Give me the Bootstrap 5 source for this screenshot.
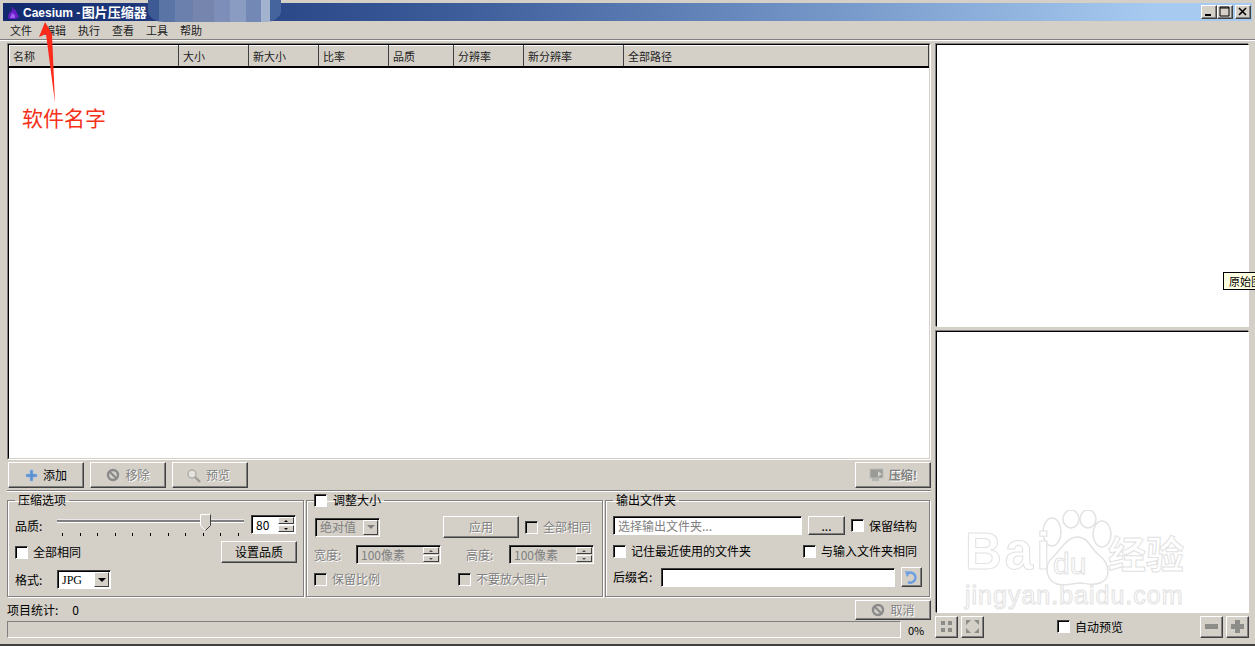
<!DOCTYPE html>
<html lang="zh-CN">
<head>
<meta charset="UTF-8">
<title>Caesium - 图片压缩器</title>
<link href="https://cdn.jsdelivr.net/npm/bootstrap@5.3.0/dist/css/bootstrap.min.css" rel="stylesheet">
<style>
  html, body { width: 1255px; height: 646px; overflow: hidden; }
  body { position: relative; background: #d4d0c8; color: #000; font: 12px/14px "Liberation Sans", "Noto Sans CJK SC", sans-serif; border-bottom: 2px solid #404040; }
  .cjk { font-family: "Noto Sans CJK SC", sans-serif; }

  /* title bar */
  .title-bar { height: 18px; margin: 3px 3px 0; padding-left: 4px; background: linear-gradient(90deg, #12296e 0%, #3a5a98 35%, #a6caf0 92%); color: #fff; font-weight: 700; font-size: 12px; }
  .title-bar svg { margin-right: 3px; }
  .title-cn { font-size: 13px; margin-left: -2px; }
  .cap-group { margin-right: 1px; }
  .cap-btn { width: 16px; height: 14px; padding: 0; background: #d4d0c8; border: 1px solid; border-color: #fff #404040 #404040 #fff; box-shadow: inset -1px -1px 0 #808080; }
  .cap-btn svg { display: block; }
  .cap-gap { margin-right: 2px; }

  /* menu */
  .menu-bar { height: 19px; padding-left: 10px; gap: 12px; border-bottom: 1px solid #808080; box-shadow: 0 1px 0 #fff; font-size: 11px; color: #222; }

  /* layout */
  .main-area { height: 604px; padding: 3px 3px 0 7px; gap: 5px; }
  .left-side { width: 924px; }
  .right-side { width: 313px; }

  /* list */
  .list-box { height: 417px; background: #fff; border: 1px solid; border-color: #808080 #fff #fff #808080; }
  .list-inner { height: 100%; border: 1px solid; border-color: #000 #d4d0c8 #d4d0c8 #000; }
  .list-head { table-layout: fixed; width: 920px; margin: 0; font-size: 11px; color: #222; }
  .list-head th { height: 21px; padding: 0 0 0 4px; font-weight: 400; background: #d4d0c8; border: 1px solid; border-color: #fff #404040 #000 #fff; border-bottom-width: 2px; line-height: 18px; }
  .list-head th:nth-child(1) { width: 169px; padding-left: 3px; }
  .list-head th:nth-child(2), .list-head th:nth-child(3), .list-head th:nth-child(4) { width: 70px; }
  .list-head th:nth-child(5) { width: 65px; }
  .list-head th:nth-child(6) { width: 70px; }
  .list-head th:nth-child(7) { width: 100px; }

  /* buttons */
  .win-btn { display: inline-flex; align-items: center; justify-content: center; gap: 5px; height: 26px; padding: 0; border-radius: 0; background: #d4d0c8; color: #000; font-size: 12px; line-height: 14px; border: 1px solid; border-color: #fff #404040 #404040 #fff; box-shadow: inset -1px -1px 0 #808080; }
  .win-btn.wide { width: 76px; }
  .win-btn.low { height: 22px; }
  .win-btn.off, .off-text { color: #808080; text-shadow: 1px 1px 0 #fff; }
  .win-btn.nudge { padding-right: 4px; }
  .tool-row { height: 26px; margin: 2px 0 0 1px; gap: 6px; }
  .sep-line { height: 2px; margin: 2px 0 0; border-top: 1px solid #808080; border-bottom: 1px solid #fff; }

  /* group boxes */
  .group-row { gap: 2px; margin: 1px 0 0; height: 104px; }
  .win-group { height: 104px; margin: 0; padding: 0 7px; border: 1px solid #808080; box-shadow: 1px 1px 0 #fff, inset 1px 1px 0 #fff; min-width: 0; }
  .win-group legend { float: none; width: auto; margin: 0; padding: 0 3px; font-size: 12px; line-height: 14px; display: flex; align-items: center; gap: 6px; }
  .win-group legend.flush { padding-left: 0; }
  .grp-a { width: 297px; }
  .grp-b { width: 297px; }
  .grp-c { width: 325px; }

  .rowa-1 { height: 24px; margin-top: 8px; }
  .rowa-2 { margin-top: 2px; margin-right: -1px; }
  .rowa-3 { margin-top: 7px; }
  .rowb-1 { height: 22px; margin-top: 9px; }
  .rowb-2 { margin-top: 7px; }
  .rowb-3 { margin-top: 8px; }
  .rowc-1 { margin-top: 9px; }
  .rowc-2 { margin-top: 9px; width: 304px; }
  .rowc-3 { margin-top: 9px; height: 20px; }

  .lab-w { flex: none; width: 42px; white-space: nowrap; }
  .lab-suffix { flex: none; width: 48px; white-space: nowrap; }
  .lab-high { flex: none; width: 43px; margin-left: 25px; }

  .chk-box { appearance: none; flex: none; width: 13px; height: 13px; margin: 0; background: #fff; border: 1px solid; border-color: #404040 #fff #fff #404040; display: block; box-shadow: inset 1px 1px 0 #000; }
  .chk-box:disabled { background: #d4d0c8; }
  .chk-label { display: inline-flex; align-items: center; gap: 5px; margin: 0; white-space: nowrap; }
  .chk-keep { width: 144px; }
  .chk-auto { margin-left: 73px; }
  .gap-six { margin-left: 6px; }
  .gap-seven { margin-left: 7px; }

  .win-field { display: flex; align-items: center; background: #fff; border: 1px solid; border-color: #404040 #fff #fff #404040; box-shadow: inset 1px 1px 0 #000; padding-left: 4px; height: 19px; overflow: hidden; white-space: nowrap; }
  .win-field.off { background: #d4d0c8; color: #808080; }
  .win-spin { justify-content: space-between; padding-right: 1px; }
  .fld-quality { width: 45px; }
  .fld-format { width: 54px; font-family: "Liberation Serif", serif; }
  .fld-mode { width: 65px; margin-left: 1px; }
  .fld-size { width: 85px; }
  .fld-folder { width: 189px; color: #808080; }
  .fld-suffix { width: 235px; }
  .spin-arrows { flex: none; width: 16px; height: 15px; display: flex; flex-direction: column; gap: 1px; }
  .spin-arrows i { flex: 1; display: flex; align-items: center; justify-content: center; background: #d4d0c8; border: 1px solid; border-color: #fff #404040 #404040 #fff; }
  .spin-arrows b { width: 0; height: 0; border-left: 2px solid transparent; border-right: 2px solid transparent; }
  .spin-arrows i:first-child b { border-bottom: 2px solid #000; }
  .spin-arrows i:last-child b { border-top: 2px solid #000; }
  .win-field.off .spin-arrows b { border-top-color: #555; border-bottom-color: #555; }
  .drop-arrow { flex: none; display: flex; align-items: center; justify-content: center; width: 15px; height: 15px; margin-left: auto; margin-right: 1px; background: #d4d0c8; border: 1px solid; border-color: #fff #404040 #404040 #fff; }
  .drop-arrow b { width: 0; height: 0; border-left: 4px solid transparent; border-right: 4px solid transparent; border-top: 4px solid #000; }
  .win-field.off .drop-arrow b { border-top-color: #808080; }
  .btn-apply { margin-left: 63px; }
  .btn-browse { width: 37px; height: 19px !important; }
  .btn-reload { width: 21px; height: 20px; }
  .btn-cancel { height: 20px !important; }

  /* slider */
  .slide-wrap { flex: none; width: 187px; height: 24px; }
  .slide-track { height: 2px; margin-top: 5px; background: #808080; box-shadow: 0 1px 0 #fff, 0 -1px 0 #e8e8e8; }
  .slide-thumb { position: absolute; left: 143px; top: -1px; }
  .slide-ticks { margin-top: 11px; padding: 0 5px; }
  .slide-ticks i { width: 1px; height: 3px; background: #000; }

  /* progress */
  .stat-row { height: 20px; margin-top: 3px; }
  .stat-num { margin-left: 14px; }
  .prog-row { height: 17px; margin-top: 1px; }
  .prog-box { width: 894px; height: 17px; border: 1px solid; border-color: #808080 #fff #fff #808080; }
  .prog-pct { margin-left: 7px; font-size: 11px; }

  /* preview */
  .pre-pane { background: #fff; border: 1px solid; border-color: #000 #fff #fff #000; box-shadow: -1px -1px 0 #808080; }
  .pre-top { height: 283px; margin-top: 1px; }
  .pre-bottom { height: 282px; margin-top: 4px; }
  .pre-bar { height: 21px; margin-top: 3px; }
  .sq-btn { width: 23px; height: 22px; }
  .sq-first { margin-left: -1px; }
  .sq-next { margin-left: 3px; }
  .tip-box { position: absolute; left: 1223px; top: 272px; width: 40px; height: 18px; padding-left: 5px; background: #ffffe1; border: 1px solid #000; font-size: 11px; line-height: 16px; white-space: nowrap; }

  /* things laid over the screenshot */
  .blur-patch { position: absolute; left: 148px; top: 0; width: 133px; height: 22px; border-radius: 0 0 16px 16px / 0 0 11px 11px; background: linear-gradient(90deg, #3d5a94 0 8%, #5a74a6 8% 20%, #6b80ac 20% 34%, #7585ad 34% 50%, #7d8fb8 50% 62%, #8b9cc2 62% 74%, #7488b5 74% 85%, #a3b2cf 85% 92%, #45649e 92%); }
  .note-arrow { position: absolute; left: 36px; top: 20px; }
  .note-text { position: absolute; left: 22px; top: 104px; color: #f5311a; font-size: 21px; line-height: 27px; }
  .wm-box { position: absolute; left: 963px; top: 510px; width: 230px; height: 105px; color: #fff; -webkit-text-stroke: 1px #e2e2e2; }
  .wm-big { position: absolute; top: 12px; left: 2px; font: 700 51px/60px "Liberation Sans", sans-serif; letter-spacing: 3px; }
  .wm-du { position: absolute; top: 36px; left: 90px; font: 400 30px/36px "Liberation Sans", sans-serif; }
  .wm-cn { position: absolute; top: 18px; left: 145px; font: 700 38px/48px "Noto Sans CJK SC", sans-serif; }
  .wm-url { position: absolute; top: 70px; left: 2px; font: 400 25px/30px "Liberation Sans", sans-serif; letter-spacing: 1px; white-space: nowrap; }
  .wm-paw { position: absolute; left: 75px; top: 0; }
</style>
</head>
<body>

<div class="title-bar d-flex align-items-center">
  <svg width="13" height="13" viewBox="0 0 13 13"><path d="M5 0 7 4 8 3 12 11 9 13H2L1 10 3 6 5 5Z" fill="#6a1fc4"/><path d="M5 7 8 9 8 12 3 12Z" fill="#9d5cf0"/></svg>
  <span>Caesium - <span class="cjk title-cn">图片压缩器</span></span>
  <div class="ms-auto d-flex cap-group">
    <button class="cap-btn"><svg width="14" height="12" viewBox="0 0 14 12"><rect x="3" y="8" width="6" height="2"/></svg></button>
    <button class="cap-btn cap-gap"><svg width="14" height="12" viewBox="0 0 14 12"><path d="M2 1h9v9H2Z M2 2h9" fill="none" stroke="#000"/></svg></button>
    <button class="cap-btn"><svg width="14" height="12" viewBox="0 0 14 12"><path d="M3 2 10 9M10 2 3 9" stroke="#000" stroke-width="1.6"/></svg></button>
  </div>
</div>

<div class="menu-bar d-flex align-items-center cjk">
  <span>文件</span><span>编辑</span><span>执行</span><span>查看</span><span>工具</span><span>帮助</span>
</div>

<div class="main-area d-flex cjk">
  <div class="left-side">
    <div class="list-box">
      <div class="list-inner">
        <table class="list-head">
          <thead><tr><th>名称</th><th>大小</th><th>新大小</th><th>比率</th><th>品质</th><th>分辨率</th><th>新分辨率</th><th>全部路径</th></tr></thead>
        </table>
      </div>
    </div>

    <div class="tool-row d-flex">
      <button class="btn win-btn wide"><svg width="13" height="13" viewBox="0 0 13 13"><path d="M5 1h3v4h4v3H8v4H5V8H1V5h4Z" fill="#5b8fd0" stroke="#9cc0e8" stroke-width=".6"/></svg>添加</button>
      <button class="btn win-btn wide off"><svg width="14" height="14" viewBox="0 0 14 14"><circle cx="7" cy="7" r="5" fill="none" stroke="#8a8a8a" stroke-width="2.4"/><path d="M3.500 3.500 10.500 10.500" stroke="#8a8a8a" stroke-width="2.2"/></svg>移除</button>
      <button class="btn win-btn wide off nudge"><svg width="15" height="15" viewBox="0 0 15 15"><circle cx="6" cy="6" r="4" fill="#e6e4de" stroke="#b0aea8" stroke-width="1.5"/><path d="M9 9 14 14" stroke="#a09e98" stroke-width="2.4"/></svg>预览</button>
      <button class="btn win-btn wide off ms-auto fw-bold"><svg width="15" height="14" viewBox="0 0 15 14"><rect x="1" y="1" width="13" height="9" fill="#9a9a96" stroke="#bcbcb8"/><rect x="3" y="10" width="7" height="3" fill="#b4b4b0"/><path d="M9 3 13 6 9 9Z" fill="#d0d0cc"/></svg>压缩!</button>
    </div>
    <div class="sep-line"></div>

    <div class="group-row d-flex">
      <fieldset class="win-group grp-a">
        <legend>压缩选项</legend>
        <div class="d-flex align-items-start rowa-1">
          <span class="lab-w mt-1">品质:</span>
          <div class="slide-wrap position-relative">
            <div class="slide-track"></div>
            <svg class="slide-thumb" width="11" height="17" viewBox="0 0 11 17"><path d="M.5.500h10v11l-5 5-5-5Z" fill="#d4d0c8" stroke="#fff"/><path d="M10.500.500v11l-5 5" fill="none" stroke="#404040"/></svg>
            <div class="slide-ticks d-flex justify-content-between"><i></i><i></i><i></i><i></i><i></i><i></i><i></i><i></i><i></i><i></i><i></i></div>
          </div>
          <div class="win-field win-spin fld-quality gap-seven"><span>80</span><span class="spin-arrows"><i><b></b></i><i><b></b></i></span></div>
        </div>
        <div class="d-flex align-items-center justify-content-between rowa-2">
          <label class="chk-label"><input class="chk-box" type="checkbox">全部相同</label>
          <button class="btn win-btn wide low">设置品质</button>
        </div>
        <div class="d-flex align-items-center rowa-3">
          <span class="lab-w">格式:</span>
          <div class="win-field fld-format">JPG<span class="drop-arrow"><b></b></span></div>
        </div>
      </fieldset>

      <fieldset class="win-group grp-b">
        <legend class="flush"><input class="chk-box" type="checkbox">调整大小</legend>
        <div class="d-flex align-items-center rowb-1">
          <div class="win-field off fld-mode">绝对值<span class="drop-arrow"><b></b></span></div>
          <button class="btn win-btn wide low off btn-apply">应用</button>
          <label class="chk-label off-text gap-six"><input class="chk-box" type="checkbox" disabled>全部相同</label>
        </div>
        <div class="d-flex align-items-center rowb-2">
          <span class="off-text lab-w">宽度:</span>
          <div class="win-field win-spin off fld-size">100像素<span class="spin-arrows"><i><b></b></i><i><b></b></i></span></div>
          <span class="off-text lab-high">高度:</span>
          <div class="win-field win-spin off fld-size">100像素<span class="spin-arrows"><i><b></b></i><i><b></b></i></span></div>
        </div>
        <div class="d-flex align-items-center rowb-3">
          <label class="chk-label off-text chk-keep"><input class="chk-box" type="checkbox" disabled>保留比例</label>
          <label class="chk-label off-text"><input class="chk-box" type="checkbox" disabled>不要放大图片</label>
        </div>
      </fieldset>

      <fieldset class="win-group grp-c">
        <legend>输出文件夹</legend>
        <div class="d-flex align-items-center rowc-1">
          <div class="win-field fld-folder">选择输出文件夹...</div>
          <button class="btn win-btn gap-six low btn-browse">...</button>
          <label class="chk-label gap-six"><input class="chk-box" type="checkbox">保留结构</label>
        </div>
        <div class="d-flex align-items-center justify-content-between rowc-2">
          <label class="chk-label"><input class="chk-box" type="checkbox">记住最近使用的文件夹</label>
          <label class="chk-label"><input class="chk-box" type="checkbox">与输入文件夹相同</label>
        </div>
        <div class="d-flex align-items-center rowc-3">
          <span class="lab-suffix">后缀名:</span>
          <div class="win-field fld-suffix"></div>
          <button class="btn win-btn gap-six btn-reload"><svg width="15" height="15" viewBox="0 0 15 15"><path d="M3 4 A5 5 0 1 1 4 12" fill="none" stroke="#6f9fe0" stroke-width="2.6"/><path d="M1 1 7 2 3 7Z" fill="#6f9fe0"/></svg></button>
        </div>
      </fieldset>
    </div>

    <div class="stat-row d-flex align-items-center justify-content-between">
      <span>项目统计:<span class="stat-num">0</span></span>
      <button class="btn win-btn wide low off btn-cancel"><svg width="14" height="14" viewBox="0 0 14 14"><circle cx="7" cy="7" r="5" fill="none" stroke="#8a8a8a" stroke-width="2.4"/><path d="M3.500 3.500 10.500 10.500" stroke="#8a8a8a" stroke-width="2.2"/></svg>取消</button>
    </div>
    <div class="prog-row d-flex align-items-center">
      <div class="prog-box"></div>
      <span class="prog-pct">0%</span>
    </div>
  </div>

  <div class="right-side">
    <div class="pre-pane pre-top"></div>
    <div class="pre-pane pre-bottom"></div>
    <div class="pre-bar d-flex align-items-center">
      <button class="btn win-btn sq-btn off sq-first"><svg width="13" height="13" viewBox="0 0 13 13" fill="#8c8c88"><rect x="1" y="1" width="4" height="4"/><rect x="8" y="1" width="4" height="4"/><rect x="1" y="8" width="4" height="4"/><rect x="8" y="8" width="4" height="4"/></svg></button>
      <button class="btn win-btn sq-btn off sq-next"><svg width="15" height="15" viewBox="0 0 15 15" fill="#8c8c88"><path d="M1 1h5L1 6ZM14 1v5L9 1ZM1 14V9l5 5ZM14 14H9l5-5Z"/></svg></button>
      <label class="chk-label chk-auto"><input class="chk-box" type="checkbox">自动预览</label>
      <button class="btn win-btn sq-btn off ms-auto"><svg width="15" height="15" viewBox="0 0 15 15"><rect x="1" y="5" width="13" height="5" fill="#8c8c88"/></svg></button>
      <button class="btn win-btn sq-btn off sq-next"><svg width="15" height="15" viewBox="0 0 15 15"><path d="M5 1h5v4h4v5h-4v4H5v-4H1V5h4Z" fill="#8c8c88"/></svg></button>
    </div>
  </div>
</div>

<div class="tip-box cjk">原始图</div>

<div class="blur-patch"></div>
<svg class="note-arrow" width="22" height="86" viewBox="0 0 22 86"><path d="M9 2 3 17 10 14 19 83 16 15 16 14Z" fill="#fb2a1a"/></svg>
<div class="note-text cjk">软件名字</div>

<div class="wm-box">
  <svg class="wm-paw" width="76" height="82" viewBox="0 0 76 82" fill="#fff" stroke="#e2e2e2" stroke-width="1.500"><ellipse cx="14" cy="22" rx="9" ry="14"/><ellipse cx="33" cy="9" rx="8" ry="9"/><ellipse cx="50" cy="9" rx="8" ry="9"/><ellipse cx="64" cy="24" rx="9" ry="13"/><path d="M40 27C28 27 23 40 14 48 5 56 8 74 24 75 32 75 36 73 42 73 48 73 54 76 62 73 75 68 70 52 62 46 52 38 50 27 40 27Z"/></svg>
  <span class="wm-big">Bai</span>
  <span class="wm-du">du</span>
  <span class="wm-cn">经验</span>
  <span class="wm-url">jingyan.baidu.com</span>
</div>

<script src="https://cdn.jsdelivr.net/npm/bootstrap@5.3.0/dist/js/bootstrap.bundle.min.js"></script>
</body>
</html>
